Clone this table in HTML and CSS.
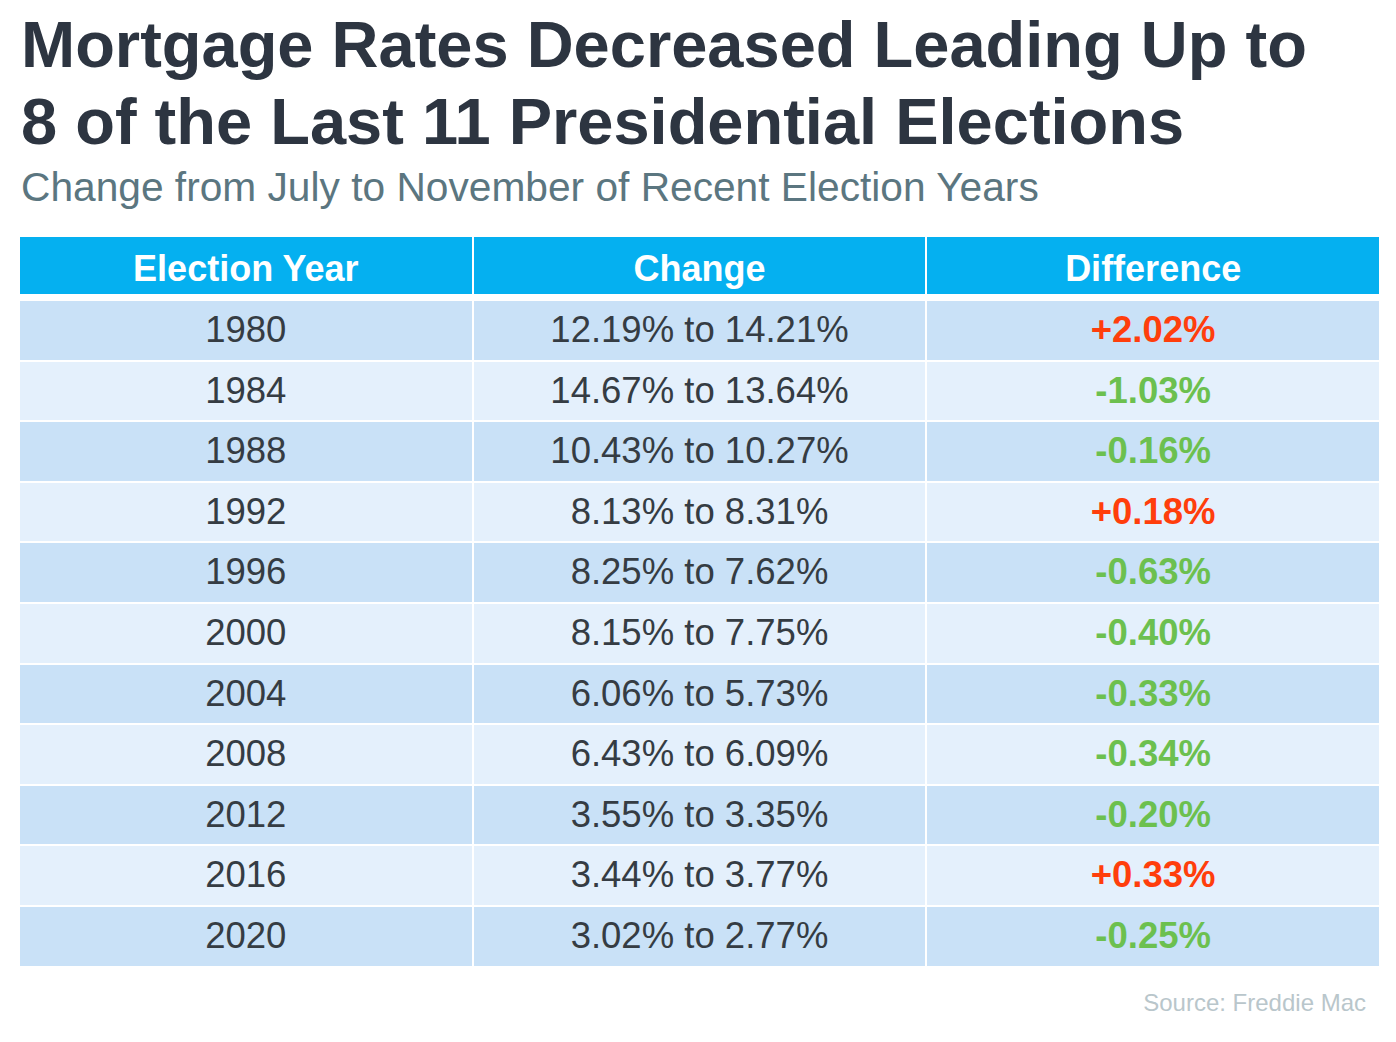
FILE: index.html
```html
<!DOCTYPE html>
<html lang="en">
<head>
<meta charset="utf-8">
<title>Mortgage Rates Decreased Leading Up to 8 of the Last 11 Presidential Elections</title>
<link rel="stylesheet" href="styles.css">
</head>
<body>
<main class="page">
  <h1 class="title">Mortgage Rates Decreased Leading Up to<br>8 of the Last 11 Presidential Elections</h1>
  <p class="subtitle">Change from July to November of Recent Election Years</p>
  <div class="table">
    <div class="th">Election Year</div><div class="th">Change</div><div class="th">Difference</div>
    <div class="td dark">1980</div><div class="td dark">12.19% to 14.21%</div><div class="td dark up">+2.02%</div>
    <div class="td light">1984</div><div class="td light">14.67% to 13.64%</div><div class="td light down">-1.03%</div>
    <div class="td dark">1988</div><div class="td dark">10.43% to 10.27%</div><div class="td dark down">-0.16%</div>
    <div class="td light">1992</div><div class="td light">8.13% to 8.31%</div><div class="td light up">+0.18%</div>
    <div class="td dark">1996</div><div class="td dark">8.25% to 7.62%</div><div class="td dark down">-0.63%</div>
    <div class="td light">2000</div><div class="td light">8.15% to 7.75%</div><div class="td light down">-0.40%</div>
    <div class="td dark">2004</div><div class="td dark">6.06% to 5.73%</div><div class="td dark down">-0.33%</div>
    <div class="td light">2008</div><div class="td light">6.43% to 6.09%</div><div class="td light down">-0.34%</div>
    <div class="td dark">2012</div><div class="td dark">3.55% to 3.35%</div><div class="td dark down">-0.20%</div>
    <div class="td light">2016</div><div class="td light">3.44% to 3.77%</div><div class="td light up">+0.33%</div>
    <div class="td dark">2020</div><div class="td dark">3.02% to 2.77%</div><div class="td dark down">-0.25%</div>
  </div>
  <p class="source">Source: Freddie Mac</p>
</main>
</body>
</html>
```
FILE: styles.css
```css
html, body {
  margin: 0;
  padding: 0;
  background: #ffffff;
}
body {
  font-family: "Liberation Sans", Arial, sans-serif;
}
.page {
  width: 1359px;
  padding: 6px 0 0 20px;
}
.title {
  margin: 0 0 0 1px;
  font-size: 65px;
  line-height: 77px;
  font-weight: bold;
  color: #2d3541;
  white-space: nowrap;
}
.subtitle {
  margin: 5px 0 0 1px;
  font-size: 40.7px;
  line-height: 44px;
  color: #5b7680;
  white-space: nowrap;
}
.table {
  margin-top: 28px;
  display: grid;
  grid-template-columns: repeat(3, 1fr);
  column-gap: 2px;
  row-gap: 2px;
}
.th {
  height: 57px;
  margin-bottom: 5px;
  box-sizing: border-box;
  padding-top: 3px;
  background: #05b0f0;
  color: #ffffff;
  font-weight: bold;
  font-size: 36px;
  line-height: 57px;
  text-align: center;
}
.td {
  height: 58.6px;
  box-sizing: border-box;
  padding-bottom: 2px;
  font-size: 36.5px;
  line-height: 58.6px;
  text-align: center;
  color: #353c43;
}
.dark {
  background: #c9e1f7;
}
.light {
  background: #e4f0fc;
}
.up {
  color: #ff3e0c;
  font-weight: bold;
  font-size: 36.5px;
}
.down {
  color: #6cc04f;
  font-weight: bold;
  font-size: 36.5px;
}
.source {
  margin: 23px 0 0 0;
  padding-right: 13px;
  text-align: right;
  font-size: 24px;
  line-height: 28px;
  color: #b9c6cb;
}
```
